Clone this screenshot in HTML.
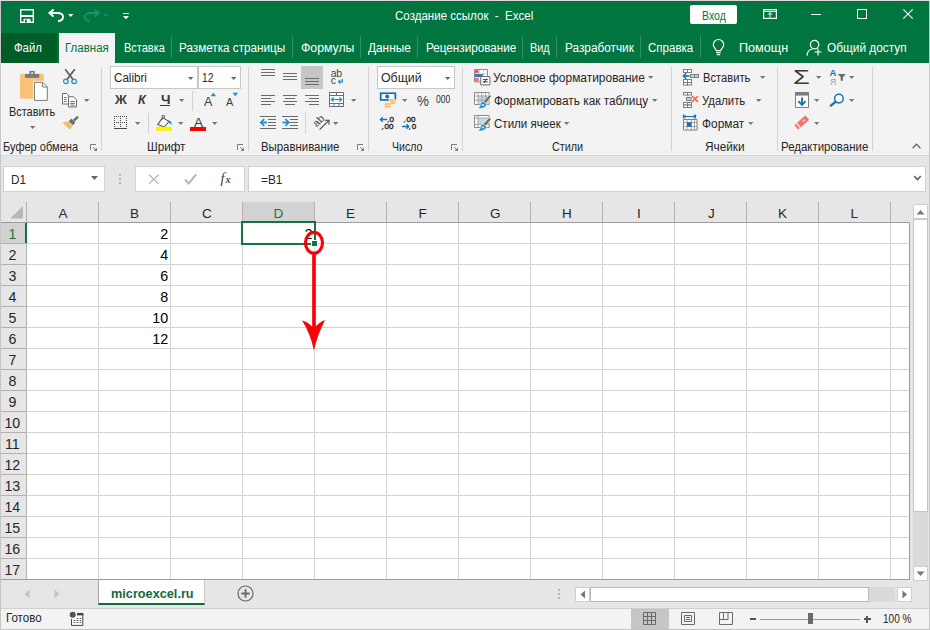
<!DOCTYPE html>
<html lang="ru"><head><meta charset="utf-8"><title>Создание ссылок - Excel</title>
<style>
html,body{margin:0;padding:0}
body{width:930px;height:630px;overflow:hidden;position:relative;background:#e6e6e6;font-family:"Liberation Sans", sans-serif;}
div,span,svg{position:absolute;box-sizing:border-box}
span{line-height:20px;white-space:pre}
svg{overflow:visible}
.g{left:0;top:0;width:0;height:0}
</style></head><body>
<div class="g" id="window-chrome">
<div style="left:0px;top:0px;width:930px;height:33px;background:#01753f;"></div>
<div style="left:0px;top:33px;width:930px;height:30px;background:#01753f;"></div>
<div style="left:1px;top:33px;width:56px;height:30px;background:#005c27;"></div>
<div style="left:59px;top:33px;width:56px;height:30px;background:#f3f3f3;"></div>
<div style="left:0px;top:63px;width:930px;height:92px;background:#f3f3f3;"></div>
<div style="left:0px;top:155px;width:930px;height:1px;background:#d6d6d6;"></div>
<div style="left:171px;top:36px;width:1px;height:22px;background:rgba(255,255,255,0.2);"></div>
<div style="left:292px;top:36px;width:1px;height:22px;background:rgba(255,255,255,0.2);"></div>
<div style="left:360px;top:36px;width:1px;height:22px;background:rgba(255,255,255,0.2);"></div>
<div style="left:417px;top:36px;width:1px;height:22px;background:rgba(255,255,255,0.2);"></div>
<div style="left:522px;top:36px;width:1px;height:22px;background:rgba(255,255,255,0.2);"></div>
<div style="left:556px;top:36px;width:1px;height:22px;background:rgba(255,255,255,0.2);"></div>
<div style="left:640px;top:36px;width:1px;height:22px;background:rgba(255,255,255,0.2);"></div>
<div style="left:700px;top:36px;width:1px;height:22px;background:rgba(255,255,255,0.2);"></div>
<div style="left:690px;top:5px;width:47px;height:19px;background:#fff;border-radius:2px;"></div>
<div style="left:101px;top:67px;width:1px;height:84px;background:#d2d2d2;"></div>
<div style="left:248px;top:67px;width:1px;height:84px;background:#d2d2d2;"></div>
<div style="left:368px;top:67px;width:1px;height:84px;background:#d2d2d2;"></div>
<div style="left:462px;top:67px;width:1px;height:84px;background:#d2d2d2;"></div>
<div style="left:671px;top:67px;width:1px;height:84px;background:#d2d2d2;"></div>
<div style="left:777px;top:67px;width:1px;height:84px;background:#d2d2d2;"></div>
<div style="left:872px;top:67px;width:1px;height:84px;background:#d2d2d2;"></div>
</div>
<div class="g" id="formula-bar">
<div style="left:3px;top:166px;width:102px;height:26px;background:#fff;border:1px solid #d1d1d1;"></div>
<div style="left:135px;top:166px;width:110px;height:26px;background:#fff;border:1px solid #d1d1d1;"></div>
<div style="left:248px;top:166px;width:678px;height:26px;background:#fff;border:1px solid #d1d1d1;"></div>
<div style="left:119px;top:174px;width:2px;height:2px;background:#b5b5b5;"></div>
<div style="left:119px;top:178px;width:2px;height:2px;background:#b5b5b5;"></div>
<div style="left:119px;top:182px;width:2px;height:2px;background:#b5b5b5;"></div>
</div>
<div class="g" id="grid">
<div style="left:0px;top:202px;width:910px;height:21px;background:#e6e6e6;"></div>
<div style="left:26px;top:223px;width:884px;height:357px;background:#fff;"></div>
<div style="left:242px;top:202px;width:72px;height:20px;background:#d2d2d2;"></div>
<div style="left:0px;top:223px;width:26px;height:20px;background:#d2d2d2;"></div>
<div style="left:26px;top:223px;width:1px;height:357px;background:#d4d4d4;"></div>
<div style="left:26px;top:202px;width:1px;height:20px;background:#b1b1b1;"></div>
<div style="left:98px;top:223px;width:1px;height:357px;background:#d4d4d4;"></div>
<div style="left:98px;top:202px;width:1px;height:20px;background:#b1b1b1;"></div>
<div style="left:170px;top:223px;width:1px;height:357px;background:#d4d4d4;"></div>
<div style="left:170px;top:202px;width:1px;height:20px;background:#b1b1b1;"></div>
<div style="left:242px;top:223px;width:1px;height:357px;background:#d4d4d4;"></div>
<div style="left:242px;top:202px;width:1px;height:20px;background:#b1b1b1;"></div>
<div style="left:314px;top:223px;width:1px;height:357px;background:#d4d4d4;"></div>
<div style="left:314px;top:202px;width:1px;height:20px;background:#b1b1b1;"></div>
<div style="left:386px;top:223px;width:1px;height:357px;background:#d4d4d4;"></div>
<div style="left:386px;top:202px;width:1px;height:20px;background:#b1b1b1;"></div>
<div style="left:458px;top:223px;width:1px;height:357px;background:#d4d4d4;"></div>
<div style="left:458px;top:202px;width:1px;height:20px;background:#b1b1b1;"></div>
<div style="left:530px;top:223px;width:1px;height:357px;background:#d4d4d4;"></div>
<div style="left:530px;top:202px;width:1px;height:20px;background:#b1b1b1;"></div>
<div style="left:602px;top:223px;width:1px;height:357px;background:#d4d4d4;"></div>
<div style="left:602px;top:202px;width:1px;height:20px;background:#b1b1b1;"></div>
<div style="left:674px;top:223px;width:1px;height:357px;background:#d4d4d4;"></div>
<div style="left:674px;top:202px;width:1px;height:20px;background:#b1b1b1;"></div>
<div style="left:746px;top:223px;width:1px;height:357px;background:#d4d4d4;"></div>
<div style="left:746px;top:202px;width:1px;height:20px;background:#b1b1b1;"></div>
<div style="left:818px;top:223px;width:1px;height:357px;background:#d4d4d4;"></div>
<div style="left:818px;top:202px;width:1px;height:20px;background:#b1b1b1;"></div>
<div style="left:890px;top:223px;width:1px;height:357px;background:#d4d4d4;"></div>
<div style="left:890px;top:202px;width:1px;height:20px;background:#b1b1b1;"></div>
<div style="left:27px;top:243px;width:883px;height:1px;background:#d4d4d4;"></div>
<div style="left:0px;top:243px;width:26px;height:1px;background:#b1b1b1;"></div>
<div style="left:27px;top:264px;width:883px;height:1px;background:#d4d4d4;"></div>
<div style="left:0px;top:264px;width:26px;height:1px;background:#b1b1b1;"></div>
<div style="left:27px;top:285px;width:883px;height:1px;background:#d4d4d4;"></div>
<div style="left:0px;top:285px;width:26px;height:1px;background:#b1b1b1;"></div>
<div style="left:27px;top:306px;width:883px;height:1px;background:#d4d4d4;"></div>
<div style="left:0px;top:306px;width:26px;height:1px;background:#b1b1b1;"></div>
<div style="left:27px;top:327px;width:883px;height:1px;background:#d4d4d4;"></div>
<div style="left:0px;top:327px;width:26px;height:1px;background:#b1b1b1;"></div>
<div style="left:27px;top:348px;width:883px;height:1px;background:#d4d4d4;"></div>
<div style="left:0px;top:348px;width:26px;height:1px;background:#b1b1b1;"></div>
<div style="left:27px;top:369px;width:883px;height:1px;background:#d4d4d4;"></div>
<div style="left:0px;top:369px;width:26px;height:1px;background:#b1b1b1;"></div>
<div style="left:27px;top:390px;width:883px;height:1px;background:#d4d4d4;"></div>
<div style="left:0px;top:390px;width:26px;height:1px;background:#b1b1b1;"></div>
<div style="left:27px;top:411px;width:883px;height:1px;background:#d4d4d4;"></div>
<div style="left:0px;top:411px;width:26px;height:1px;background:#b1b1b1;"></div>
<div style="left:27px;top:432px;width:883px;height:1px;background:#d4d4d4;"></div>
<div style="left:0px;top:432px;width:26px;height:1px;background:#b1b1b1;"></div>
<div style="left:27px;top:453px;width:883px;height:1px;background:#d4d4d4;"></div>
<div style="left:0px;top:453px;width:26px;height:1px;background:#b1b1b1;"></div>
<div style="left:27px;top:474px;width:883px;height:1px;background:#d4d4d4;"></div>
<div style="left:0px;top:474px;width:26px;height:1px;background:#b1b1b1;"></div>
<div style="left:27px;top:495px;width:883px;height:1px;background:#d4d4d4;"></div>
<div style="left:0px;top:495px;width:26px;height:1px;background:#b1b1b1;"></div>
<div style="left:27px;top:516px;width:883px;height:1px;background:#d4d4d4;"></div>
<div style="left:0px;top:516px;width:26px;height:1px;background:#b1b1b1;"></div>
<div style="left:27px;top:537px;width:883px;height:1px;background:#d4d4d4;"></div>
<div style="left:0px;top:537px;width:26px;height:1px;background:#b1b1b1;"></div>
<div style="left:27px;top:558px;width:883px;height:1px;background:#d4d4d4;"></div>
<div style="left:0px;top:558px;width:26px;height:1px;background:#b1b1b1;"></div>
<div style="left:26px;top:223px;width:1px;height:357px;background:#b1b1b1;"></div>
<div style="left:0px;top:222px;width:910px;height:1px;background:#9d9d9d;"></div>
<div style="left:909px;top:222px;width:1px;height:358px;background:#9d9d9d;"></div>
<div style="left:0px;top:579px;width:910px;height:1px;background:#9d9d9d;"></div>
<div style="left:25px;top:223px;width:2px;height:20px;background:#12753f;"></div>
<div style="left:242px;top:221px;width:72px;height:2px;background:#12753f;"></div>
<svg style="left:10px;top:206px" width="13" height="13" viewBox="0 0 13 13"><path d="M13 0v12.600H0.200z" fill="#b7b7b7"/></svg>
</div>
<div class="g" id="selection">
<div style="left:241px;top:221px;width:75px;height:24px;border:2px solid #12753f;"></div>
<div style="left:310.5px;top:239.5px;width:8px;height:7px;background:#fff;"></div>
<div style="left:312px;top:241px;width:5px;height:5px;background:#12753f;"></div>
</div>
<div class="g" id="vertical-scrollbar">
<div style="left:913px;top:204px;width:15px;height:15px;background:#fff;border:1px solid #cfcfcf;"></div>
<svg style="left:916px;top:209px" width="9" height="6" viewBox="0 0 9 6"><path d="M0.5 5.5h8l-4-4.5z" fill="#777"/></svg>
<div style="left:913px;top:219px;width:15px;height:293px;background:#fff;border:1px solid #c4c4c4;"></div>
<div style="left:913px;top:512px;width:15px;height:55px;background:#dadada;"></div>
<div style="left:913px;top:566px;width:15px;height:15px;background:#fff;border:1px solid #cfcfcf;"></div>
<svg style="left:916px;top:571px" width="9" height="6" viewBox="0 0 9 6"><path d="M0.5 0.5h8l-4 4.5z" fill="#777"/></svg>
</div>
<div class="g" id="bottom-sheet-tabs-h-scrollbar">
<div style="left:98px;top:580px;width:107px;height:25px;background:#fff;border-bottom:2px solid #0a6b35;border-left:1px solid #a6a6a6;border-right:1px solid #c6c6c6"></div>
<svg style="left:24px;top:588.6px" width="6" height="10" viewBox="0 0 6 10"><path d="M5.5 0.5v9l-5-4.5z" fill="#c3c3c3"/></svg>
<svg style="left:53.6px;top:588.6px" width="6" height="10" viewBox="0 0 6 10"><path d="M0.5 0.5v9l5-4.5z" fill="#c3c3c3"/></svg>
<svg style="left:237px;top:585px" width="17" height="17" viewBox="0 0 17 17"><circle cx="8.5" cy="8.5" r="7.5" fill="none" stroke="#6a6a6a" stroke-width="1.2"/><path d="M8.5 4.300v8.400M4.300 8.500h8.400" stroke="#6a6a6a" stroke-width="1.800"/></svg>
<div style="left:558px;top:589px;width:2px;height:2px;background:#b5b5b5;"></div>
<div style="left:558px;top:593px;width:2px;height:2px;background:#b5b5b5;"></div>
<div style="left:558px;top:597px;width:2px;height:2px;background:#b5b5b5;"></div>
<div style="left:575px;top:587px;width:15px;height:15px;background:#fff;border:1px solid #cfcfcf;"></div>
<svg style="left:580px;top:590px" width="6" height="9" viewBox="0 0 6 9"><path d="M5 0.5v8l-4.5-4z" fill="#777"/></svg>
<div style="left:590px;top:587px;width:279px;height:15px;background:#fff;border:1px solid #b9b9b9;"></div>
<div style="left:869px;top:587px;width:26px;height:15px;background:#dadada;"></div>
<div style="left:897px;top:587px;width:15px;height:15px;background:#fff;border:1px solid #cfcfcf;"></div>
<svg style="left:902px;top:590px" width="6" height="9" viewBox="0 0 6 9"><path d="M0.5 0.5v8l4.5-4z" fill="#777"/></svg>
</div>
<div class="g" id="status-bar">
<div style="left:0px;top:608px;width:930px;height:22px;background:#f3f3f3;border-top:1px solid #cfcfcf;"></div>
<div style="left:631px;top:609px;width:38px;height:20px;background:#c6c6c6;"></div>
<div style="left:760px;top:619px;width:100px;height:1px;background:#9a9a9a;"></div>
<div style="left:808px;top:613px;width:5px;height:11px;background:#6b6b6b;"></div>
<div style="left:750px;top:618px;width:6px;height:2px;background:#555;"></div>
<div style="left:863.5px;top:618px;width:7px;height:2px;background:#555;"></div>
<div style="left:866px;top:615.5px;width:2px;height:7px;background:#555;"></div>
</div>
<div class="g" id="title-bar-icons">
<svg style="left:20px;top:9px" width="14" height="14" viewBox="0 0 14 14"><path d="M0.700 0.700h12.600v12.600h-12.600z" fill="none" stroke="#fff" stroke-width="1.400"/><path d="M1 7h12" stroke="#fff" stroke-width="2"/><path d="M3.600 9.800h6.800v3.400h-6.800z" fill="#fff"/><path d="M5 10.800h1.800v2.600H5z" fill="#01753f"/></svg>
<svg style="left:48px;top:8px" width="17" height="15" viewBox="0 0 17 15"><path d="M2 5H9.500c7 0 7.400 7.200 0.600 8.200" fill="none" stroke="#fff" stroke-width="1.900"/><path d="M5.600 1.400L1.400 5l4.200 3.600" fill="none" stroke="#fff" stroke-width="2"/></svg>
<svg style="left:66.9px;top:13.0px" width="7.4" height="5" viewBox="0 0 7.4 5"><path d="M1 1h5.4l-2.7 3z" fill="#fff"/></svg>
<svg style="left:83px;top:8px" width="17" height="15" viewBox="0 0 17 15"><path d="M15 5H7.500c-7 0-7.400 7.200-0.600 8.200" fill="none" stroke="#10926a" stroke-width="2.200"/><path d="M11.400 1.400L15.600 5l-4.200 3.600" fill="none" stroke="#10926a" stroke-width="2.300"/></svg>
<svg style="left:101.8px;top:13.0px" width="7.4" height="5" viewBox="0 0 7.4 5"><path d="M1 1h5.4l-2.7 3z" fill="#10926a"/></svg>
<div style="left:123px;top:13px;width:6px;height:1px;background:#fff;"></div>
<svg style="left:122.0px;top:14.8px" width="8" height="5.2" viewBox="0 0 8 5.2"><path d="M1 1h6l-3.0 3.2z" fill="#fff"/></svg>
<svg style="left:763px;top:9px" width="14" height="10" viewBox="0 0 14 10"><path d="M0.6 0.6h12.8v8.8h-12.8z" fill="none" stroke="#fff" stroke-width="1.2"/><path d="M0.6 2.4h12.8" stroke="#fff" stroke-width="1"/><path d="M7 8.5v-4.6M4.8 5.8L7 3.6l2.2 2.2" fill="none" stroke="#fff" stroke-width="1"/></svg>
<div style="left:811px;top:14px;width:10px;height:1px;background:#fff;"></div>
<div style="left:857px;top:9px;width:10px;height:10px;border:1px solid #fff;"></div>
<svg style="left:903px;top:9px" width="10" height="10" viewBox="0 0 10 10"><path d="M0.3 0.3l9.4 9.4M9.7 0.3l-9.4 9.4" stroke="#fff" stroke-width="1.1"/></svg>
<svg style="left:712px;top:39px" width="13" height="18" viewBox="0 0 13 18"><path d="M4.2 11.6c0-2-2.9-2.9-2.9-5.9a5.2 5.2 0 0 1 10.4 0c0 3-2.9 3.9-2.9 5.9z" fill="none" stroke="#fff" stroke-width="1.2"/><path d="M4.3 13.6h4.4M4.8 15.6h3.4" stroke="#fff" stroke-width="1.1"/></svg>
<svg style="left:806px;top:39px" width="17" height="18" viewBox="0 0 17 18"><circle cx="8.6" cy="5.6" r="4.2" fill="none" stroke="#fff" stroke-width="1.2"/><path d="M1 16.6c0.3-4 2.6-6.2 5.6-6.6" fill="none" stroke="#fff" stroke-width="1.2"/><path d="M12 9.5v7M8.5 13h7" stroke="#fff" stroke-width="1.2"/></svg>
<div style="left:0px;top:0px;width:930px;height:1px;background:#e2d7da;"></div>
<div style="left:0px;top:1px;width:1px;height:629px;background:#c6c6c6;"></div>
<div style="left:929px;top:1px;width:1px;height:629px;background:#c6c6c6;"></div>
<div style="left:0px;top:629px;width:930px;height:1px;background:#c2c2c2;"></div>
</div>
<div class="g" id="clipboard-group">
<svg style="left:20px;top:70px" width="29" height="32" viewBox="0 0 29 32"><rect x="0" y="3.8" width="24" height="25" rx="1.6" fill="#f8c277"/><path d="M5 4h14.2v3.9H5z" fill="#7a7a7a"/><path d="M9.4 0.9h5.3v3.5H9.4z" fill="#7a7a7a"/><rect x="11.2" y="2.2" width="1.8" height="1.6" fill="#f3f3f3"/><path d="M13 10.8h11v18H13z" fill="#f3f3f3"/><path d="M14.5 12.3h8.3l4.5 4.5v13.6h-12.8z" fill="#fff" stroke="#7a7a7a" stroke-width="1"/><path d="M22.6 12.5v4.5h4.5" fill="none" stroke="#7a7a7a" stroke-width="1"/></svg>
<svg style="left:28.9px;top:125.0px" width="7.4" height="5" viewBox="0 0 7.4 5"><path d="M1 1h5.4l-2.7 3z" fill="#777"/></svg>
<svg style="left:62px;top:68px" width="16" height="17" viewBox="0 0 16 17"><path d="M3.2 1.2l8.4 11M12.8 1.2l-8.4 11" stroke="#5e5e5e" stroke-width="1.7" fill="none"/><circle cx="3.9" cy="13.3" r="2.3" fill="none" stroke="#1e8bcd" stroke-width="1.2"/><circle cx="12.1" cy="13.3" r="2.3" fill="none" stroke="#1e8bcd" stroke-width="1.2"/></svg>
<svg style="left:61px;top:92px" width="17" height="16" viewBox="0 0 17 16"><path d="M1.5 1.5h4.2l2.3 2.3v8.2h-6.5z" fill="#fff" stroke="#6d6d6d" stroke-width="1"/><path d="M3 5.5h2.6M3 7.5h2.6M3 9.5h2.6" stroke="#1e8bcd" stroke-width="1"/><path d="M7.5 4.7h5l3 3v7.3h-8z" fill="#fff" stroke="#6d6d6d" stroke-width="1"/><path d="M9.2 9.5h4.6M9.2 11.5h4.6M9.2 13.2h4.6" stroke="#1e8bcd" stroke-width="1"/></svg>
<svg style="left:82.8px;top:98.0px" width="7.4" height="5" viewBox="0 0 7.4 5"><path d="M1 1h5.4l-2.7 3z" fill="#777"/></svg>
<svg style="left:61px;top:115px" width="18" height="16" viewBox="0 0 18 16"><path d="M16.2 0.8l1.6 1.6l-4 4.2l-1.8-1.8z" fill="#6d6d6d"/><path d="M10.4 3.6l4 4l-2.6 2.6l-4-4z" fill="#6d6d6d"/><path d="M7.4 6.6l4 4l-2.4 4.2l-7.6-7.2z" fill="#f5b968"/></svg>
<svg style="left:90px;top:144px" width="8" height="8" viewBox="0 0 8 8"><path d="M0.500 6V0.500H6" fill="none" stroke="#7a7a7a" stroke-width="1"/><path d="M3.200 3.200L6 6" stroke="#7a7a7a" stroke-width="1"/><path d="M7 3.400V7H3.400z" fill="#7a7a7a"/></svg>
<svg style="left:237px;top:144px" width="8" height="8" viewBox="0 0 8 8"><path d="M0.500 6V0.500H6" fill="none" stroke="#7a7a7a" stroke-width="1"/><path d="M3.200 3.200L6 6" stroke="#7a7a7a" stroke-width="1"/><path d="M7 3.400V7H3.400z" fill="#7a7a7a"/></svg>
<svg style="left:357px;top:144px" width="8" height="8" viewBox="0 0 8 8"><path d="M0.500 6V0.500H6" fill="none" stroke="#7a7a7a" stroke-width="1"/><path d="M3.200 3.200L6 6" stroke="#7a7a7a" stroke-width="1"/><path d="M7 3.400V7H3.400z" fill="#7a7a7a"/></svg>
<svg style="left:451px;top:144px" width="8" height="8" viewBox="0 0 8 8"><path d="M0.500 6V0.500H6" fill="none" stroke="#7a7a7a" stroke-width="1"/><path d="M3.200 3.200L6 6" stroke="#7a7a7a" stroke-width="1"/><path d="M7 3.400V7H3.400z" fill="#7a7a7a"/></svg>
<svg style="left:912px;top:143px" width="9" height="6" viewBox="0 0 9 6"><path d="M0.6 5.2l3.9-4l3.9 4" fill="none" stroke="#666" stroke-width="1.3"/></svg>
</div>
<div class="g" id="font-group">
<div style="left:110px;top:66px;width:88px;height:23px;background:#fff;border:1px solid #c6c6c6;"></div>
<div style="left:198px;top:66px;width:43px;height:23px;background:#fff;border:1px solid #c6c6c6;"></div>
<svg style="left:186.7px;top:75.5px" width="7.4" height="5" viewBox="0 0 7.4 5"><path d="M1 1h5.4l-2.7 3z" fill="#666"/></svg>
<svg style="left:229.7px;top:75.5px" width="7.4" height="5" viewBox="0 0 7.4 5"><path d="M1 1h5.4l-2.7 3z" fill="#666"/></svg>
<div style="left:160px;top:105px;width:10px;height:1px;background:#3b3b3b;"></div>
<svg style="left:177.7px;top:98.0px" width="7.4" height="5" viewBox="0 0 7.4 5"><path d="M1 1h5.4l-2.7 3z" fill="#777"/></svg>
<div style="left:192px;top:91px;width:1px;height:20px;background:#d2d2d2;"></div>
<svg style="left:210px;top:92px" width="7" height="5" viewBox="0 0 7 5"><path d="M0.6 4.2h5.4l-2.7-3.4z" fill="#1e8bcd"/></svg>
<svg style="left:232px;top:92px" width="7" height="5" viewBox="0 0 7 5"><path d="M0.6 0.8h5.4l-2.7 3.4z" fill="#1e8bcd"/></svg>
<svg style="left:114px;top:116px" width="13" height="13" viewBox="0 0 13 13"><path d="M0 0.5h13M0 6.5h13" stroke="#444" stroke-width="1" stroke-dasharray="1 1" fill="none"/><path d="M0.5 0v12M6.5 0v12M12.5 0v12" stroke="#444" stroke-width="1" stroke-dasharray="1 1" fill="none"/><path d="M0 12.5h13" stroke="#444" stroke-width="1"/></svg>
<svg style="left:133.7px;top:120.8px" width="7.4" height="5" viewBox="0 0 7.4 5"><path d="M1 1h5.4l-2.7 3z" fill="#777"/></svg>
<div style="left:148px;top:113px;width:1px;height:21px;background:#d2d2d2;"></div>
<svg style="left:156px;top:114px" width="17" height="17" viewBox="0 0 17 17"><path d="M6.600 3.600l6.400 3.900l-4.800 5.500l-6.500-2.400z" fill="#fff" stroke="#555" stroke-width="1.100" stroke-linejoin="round"/><path d="M6.200 6V1.500h2.200V4.600" fill="none" stroke="#666" stroke-width="1"/><path d="M12.600 6.200c2.400 0.600 3.300 2.500 3 4.800c-1-1.200-1.900-1.900-3.500-2.500z" fill="#1e8bcd"/><path d="M0 12.800h16v4H0z" fill="#fff200"/></svg>
<svg style="left:176.9px;top:120.8px" width="7.4" height="5" viewBox="0 0 7.4 5"><path d="M1 1h5.4l-2.7 3z" fill="#777"/></svg>
<div style="left:190px;top:127px;width:16px;height:4px;background:#f00;"></div>
<svg style="left:210.7px;top:120.8px" width="7.4" height="5" viewBox="0 0 7.4 5"><path d="M1 1h5.4l-2.7 3z" fill="#777"/></svg>
</div>
<div class="g" id="alignment-group">
<div style="left:261px;top:69px;width:14px;height:1px;background:#6b6b6b;"></div>
<div style="left:261px;top:72px;width:14px;height:1px;background:#6b6b6b;"></div>
<div style="left:261px;top:75px;width:14px;height:1px;background:#6b6b6b;"></div>
<div style="left:283px;top:73px;width:14px;height:1px;background:#6b6b6b;"></div>
<div style="left:283px;top:76px;width:14px;height:1px;background:#6b6b6b;"></div>
<div style="left:283px;top:79px;width:14px;height:1px;background:#6b6b6b;"></div>
<div style="left:301px;top:66px;width:22px;height:23px;background:#c6c6c6;"></div>
<div style="left:305px;top:78px;width:14px;height:1px;background:#6b6b6b;"></div>
<div style="left:305px;top:81px;width:14px;height:1px;background:#6b6b6b;"></div>
<div style="left:305px;top:84px;width:14px;height:1px;background:#6b6b6b;"></div>
<div style="left:261px;top:95px;width:14px;height:1px;background:#6b6b6b;"></div>
<div style="left:261px;top:98px;width:10px;height:1px;background:#6b6b6b;"></div>
<div style="left:261px;top:101px;width:14px;height:1px;background:#6b6b6b;"></div>
<div style="left:261px;top:104px;width:10px;height:1px;background:#6b6b6b;"></div>
<div style="left:283px;top:95px;width:14px;height:1px;background:#6b6b6b;"></div>
<div style="left:285px;top:98px;width:10px;height:1px;background:#6b6b6b;"></div>
<div style="left:283px;top:101px;width:14px;height:1px;background:#6b6b6b;"></div>
<div style="left:285px;top:104px;width:10px;height:1px;background:#6b6b6b;"></div>
<div style="left:305px;top:95px;width:14px;height:1px;background:#6b6b6b;"></div>
<div style="left:309px;top:98px;width:10px;height:1px;background:#6b6b6b;"></div>
<div style="left:305px;top:101px;width:14px;height:1px;background:#6b6b6b;"></div>
<div style="left:309px;top:104px;width:10px;height:1px;background:#6b6b6b;"></div>
<svg style="left:329px;top:92px" width="15" height="15" viewBox="0 0 15 15"><path d="M0.5 0.5h14v14h-14z" fill="#fff" stroke="#6b6b6b" stroke-width="1"/><path d="M0.5 3.5h14M0.5 11.5h14M7.5 0.5v3M5 11.5v3M10 11.5v3" stroke="#6b6b6b" stroke-width="1" fill="none"/><path d="M2.5 7.5h10" stroke="#1e8bcd" stroke-width="1.2"/><path d="M4.6 5.4L2.4 7.5l2.2 2.1M10.4 5.4l2.2 2.1l-2.2 2.1" stroke="#1e8bcd" stroke-width="1.2" fill="none"/></svg>
<svg style="left:349.8px;top:98.0px" width="7.4" height="5" viewBox="0 0 7.4 5"><path d="M1 1h5.4l-2.7 3z" fill="#777"/></svg>
<div style="left:260px;top:116px;width:16px;height:1px;background:#6b6b6b;"></div>
<div style="left:260px;top:128px;width:16px;height:1px;background:#6b6b6b;"></div>
<div style="left:268px;top:119px;width:8px;height:1px;background:#6b6b6b;"></div>
<div style="left:268px;top:122px;width:8px;height:1px;background:#6b6b6b;"></div>
<div style="left:268px;top:125px;width:8px;height:1px;background:#6b6b6b;"></div>
<svg style="left:260px;top:118px" width="8" height="9" viewBox="0 0 8 9"><path d="M1 4.5h6" stroke="#1e8bcd" stroke-width="1.8"/><path d="M4.2 1.2L0.8 4.5l3.4 3.3" stroke="#1e8bcd" stroke-width="1.7" fill="none"/></svg>
<div style="left:282px;top:116px;width:16px;height:1px;background:#6b6b6b;"></div>
<div style="left:282px;top:128px;width:16px;height:1px;background:#6b6b6b;"></div>
<div style="left:290px;top:119px;width:8px;height:1px;background:#6b6b6b;"></div>
<div style="left:290px;top:122px;width:8px;height:1px;background:#6b6b6b;"></div>
<div style="left:290px;top:125px;width:8px;height:1px;background:#6b6b6b;"></div>
<svg style="left:282px;top:118px" width="8" height="9" viewBox="0 0 8 9"><path d="M0.5 4.5h6" stroke="#1e8bcd" stroke-width="1.8"/><path d="M3.4 1.2l3.4 3.3l-3.4 3.3" stroke="#1e8bcd" stroke-width="1.7" fill="none"/></svg>
<div style="left:305px;top:113px;width:1px;height:21px;background:#d2d2d2;"></div>
<svg style="left:312px;top:114px" width="19" height="17" viewBox="0 0 19 17"><text x="0" y="0" font-size="10.5" fill="#444" transform="translate(4.8 13.4) rotate(-45)">ab</text><path d="M7.6 15.6L16.6 6.6" stroke="#444" stroke-width="1.2"/><path d="M12.8 6.2h4.2v4.2" stroke="#444" stroke-width="1.1" fill="none"/></svg>
<svg style="left:331.7px;top:120.8px" width="7.4" height="5" viewBox="0 0 7.4 5"><path d="M1 1h5.4l-2.7 3z" fill="#777"/></svg>
<svg style="left:330px;top:68px" width="15" height="18" viewBox="0 0 15 18"><text x="0.8" y="8.6" font-size="10.5" fill="#444" textLength="11.4">ab</text><text x="0.8" y="16" font-size="10.5" fill="#444">c</text><path d="M12.4 11v2.8h-3.6" stroke="#1e8bcd" stroke-width="1.2" fill="none"/><path d="M10.4 11.9l-1.9 1.9l1.9 1.9" stroke="#1e8bcd" stroke-width="1.2" fill="none"/></svg>
</div>
<div class="g" id="number-group">
<div style="left:377px;top:66px;width:78px;height:23px;background:#fff;border:1px solid #c6c6c6;"></div>
<svg style="left:443.7px;top:75.5px" width="7.4" height="5" viewBox="0 0 7.4 5"><path d="M1 1h5.4l-2.7 3z" fill="#666"/></svg>
<svg style="left:379px;top:92px" width="18" height="17" viewBox="0 0 18 17"><path d="M0.8 0.4h16.4v8.4H0.8z" fill="#1272b6"/><path d="M2.6 2.1h12.8v5H2.6z" fill="#fff"/><circle cx="8.2" cy="4.6" r="2" fill="#1272b6"/><ellipse cx="13.4" cy="8.3" rx="3.6" ry="1.5" fill="#f5b968" stroke="#f3f3f3" stroke-width="0.8"/><ellipse cx="13.4" cy="10.8" rx="3.6" ry="1.5" fill="#f5b968" stroke="#f3f3f3" stroke-width="0.8"/><ellipse cx="8.6" cy="12.2" rx="3.6" ry="1.5" fill="#f5b968" stroke="#f3f3f3" stroke-width="0.8"/><ellipse cx="8.6" cy="14.6" rx="3.6" ry="1.5" fill="#f5b968" stroke="#f3f3f3" stroke-width="0.8"/></svg>
<svg style="left:400.7px;top:97.8px" width="7.4" height="5" viewBox="0 0 7.4 5"><path d="M1 1h5.4l-2.7 3z" fill="#777"/></svg>
<svg style="left:379px;top:115px" width="17" height="17" viewBox="0 0 17 17"><text x="10.400" y="6.800" font-size="8" fill="#111" stroke="#222" stroke-width="0.350">0</text><text x="5.500" y="14" font-size="8" fill="#111" stroke="#222" stroke-width="0.350" textLength="9">00</text><path d="M9.900 5.800L8.600 7.700M4.400 12.900L2.800 15" stroke="#333" stroke-width="1" fill="none"/><path d="M1.400 4.500h6.600" stroke="#1272b6" stroke-width="1.500"/><path d="M3.800 2.200L1.500 4.500L3.800 6.800" stroke="#1272b6" stroke-width="1.400" fill="none"/></svg>
<svg style="left:401px;top:115px" width="17" height="17" viewBox="0 0 17 17"><text x="5.400" y="6.800" font-size="8" fill="#111" stroke="#222" stroke-width="0.350" textLength="9">00</text><text x="10.800" y="14" font-size="8" fill="#111" stroke="#222" stroke-width="0.350">0</text><path d="M4.300 5.800L3 7.800M9.400 12.900L8 15" stroke="#333" stroke-width="1" fill="none"/><path d="M1.100 11.500h6.600" stroke="#1272b6" stroke-width="1.500"/><path d="M5.400 9.200L7.700 11.500L5.400 13.800" stroke="#1272b6" stroke-width="1.400" fill="none"/></svg>
</div>
<div class="g" id="styles-group">
<svg style="left:474px;top:69px" width="17" height="17" viewBox="0 0 17 17"><path d="M0.5 0.5h13v12.4h-13z" fill="#fff" stroke="#8a8a8a" stroke-width="1"/><path d="M1 1h3.8v3.4H1z" fill="#f4736b"/><path d="M1 5h8v3.2H1z" fill="#2e7fc1"/><path d="M1 9h3.8v3.4H1z" fill="#f4736b"/><rect x="2.2" y="2" width="1.6" height="1.4" fill="#d5352b"/><path d="M5.2 1v3.8M9.6 1v6M5.2 4.6h8" stroke="#c9c9c9" stroke-width="0.8" fill="none"/><path d="M6.7 7.5h9.2v8.4H6.7z" fill="#fff" stroke="#6d6d6d" stroke-width="1"/><path d="M8.8 10.6h5M8.8 12.8h5M12.6 9.4l-2.6 4.6" stroke="#444" stroke-width="1" fill="none"/></svg>
<svg style="left:474px;top:92px" width="17" height="17" viewBox="0 0 17 17"><path d="M0.5 0.5h14.6v12h-14.6z" fill="#fff" stroke="#8a8a8a" stroke-width="1"/><path d="M4.4 4.4h10.4v7.8H4.4z" fill="#b9dcdc"/><path d="M0.5 4h14.6M0.5 8.2h14.6M4 0.5v12M7.8 0.5v12M11.500 0.500v12" stroke="#9a9a9a" stroke-width="0.9" fill="none"/><g transform="translate(0 0.6)"><path d="M15.4 2.2L17.2 4L12 11L9.200 8.800z" fill="#6d6d6d" stroke="#f3f3f3" stroke-width="0.8"/><path d="M9.2 8.8L12.400 11.300c0.300 3.200-3.600 4.900-8.600 4.400c1.700-0.800 2.100-1.700 2.400-3.100c0.400-2 1.500-3.400 3-3.800z" fill="#1e8bcd" stroke="#f3f3f3" stroke-width="0.6"/><ellipse cx="8.9" cy="12.3" rx="1.300" ry="1" fill="#d9ecf8"/></g></svg>
<svg style="left:474px;top:115px" width="17" height="17" viewBox="0 0 17 17"><path d="M0.5 0.5h14.6v12h-14.6z" fill="#fff" stroke="#8a8a8a" stroke-width="1"/><path d="M4.4 3.400h10.4v6H4.4z" fill="#b9dcdc"/><path d="M0.5 3h14.6M0.5 9.6h14.6M4 0.5v12" stroke="#9a9a9a" stroke-width="0.900" fill="none"/><g transform="translate(0 0.2)"><path d="M15.4 2.2L17.2 4L12 11L9.200 8.800z" fill="#6d6d6d" stroke="#f3f3f3" stroke-width="0.8"/><path d="M9.2 8.8L12.400 11.300c0.300 3.200-3.600 4.900-8.600 4.400c1.700-0.800 2.100-1.700 2.400-3.100c0.400-2 1.500-3.400 3-3.800z" fill="#1e8bcd" stroke="#f3f3f3" stroke-width="0.6"/><ellipse cx="8.9" cy="12.3" rx="1.300" ry="1" fill="#d9ecf8"/></g></svg>
<svg style="left:646.8px;top:74.8px" width="7.4" height="5" viewBox="0 0 7.4 5"><path d="M1 1h5.4l-2.7 3z" fill="#777"/></svg>
<svg style="left:650.8px;top:98.0px" width="7.4" height="5" viewBox="0 0 7.4 5"><path d="M1 1h5.4l-2.7 3z" fill="#777"/></svg>
<svg style="left:562.6px;top:120.8px" width="7.4" height="5" viewBox="0 0 7.4 5"><path d="M1 1h5.4l-2.7 3z" fill="#777"/></svg>
</div>
<div class="g" id="cells-group">
<svg style="left:682px;top:68px" width="18" height="18" viewBox="0 0 18 18"><rect x="1.5" y="1.5" width="4" height="3" fill="#fff" stroke="#7d7d7d" stroke-width="1"/><rect x="5.5" y="1.5" width="4" height="3" fill="#fff" stroke="#7d7d7d" stroke-width="1"/><rect x="8.5" y="6.5" width="4" height="3" fill="#b9dcdc" stroke="#7d7d7d" stroke-width="1"/><rect x="12.5" y="6.5" width="4" height="3" fill="#b9dcdc" stroke="#7d7d7d" stroke-width="1"/><rect x="1.5" y="11.5" width="4" height="3" fill="#fff" stroke="#7d7d7d" stroke-width="1"/><rect x="5.5" y="11.5" width="4" height="3" fill="#fff" stroke="#7d7d7d" stroke-width="1"/><rect x="1.5" y="14.5" width="4" height="2.5" fill="#fff" stroke="#7d7d7d" stroke-width="1"/><rect x="5.5" y="14.5" width="4" height="2.5" fill="#fff" stroke="#7d7d7d" stroke-width="1"/><path d="M1.400 8h6" stroke="#1272b6" stroke-width="1.6"/><path d="M4.2 5.2L1.400 8l2.800 2.800" stroke="#1272b6" stroke-width="1.500" fill="none"/></svg>
<svg style="left:682px;top:91px" width="18" height="18" viewBox="0 0 18 18"><rect x="1.5" y="1.5" width="4" height="2.5" fill="#fff" stroke="#7d7d7d" stroke-width="1"/><rect x="5.5" y="1.5" width="4" height="2.5" fill="#fff" stroke="#7d7d7d" stroke-width="1"/><rect x="4.5" y="6.5" width="4.5" height="3" fill="#b9dcdc" stroke="#7d7d7d" stroke-width="1"/><rect x="1.5" y="11.5" width="4" height="2.5" fill="#fff" stroke="#7d7d7d" stroke-width="1"/><rect x="5.5" y="11.5" width="4" height="2.5" fill="#fff" stroke="#7d7d7d" stroke-width="1"/><rect x="1.5" y="14" width="4" height="2.5" fill="#fff" stroke="#7d7d7d" stroke-width="1"/><rect x="5.5" y="14" width="4" height="2.5" fill="#fff" stroke="#7d7d7d" stroke-width="1"/><path d="M10 5l6 6M16 5l-6 6" stroke="#f4644f" stroke-width="1.700"/></svg>
<svg style="left:682px;top:114px" width="17" height="18" viewBox="0 0 17 18"><path d="M1.500 2.500h12" stroke="#1272b6" stroke-width="1.100"/><path d="M1.500 0.500v4M13.500 0.500v4" stroke="#1272b6" stroke-width="1.200"/><path d="M3.600 0.900L1.800 2.500l1.800 1.600M11.400 0.900l1.800 1.600l-1.800 1.600" stroke="#1272b6" stroke-width="1" fill="none"/><path d="M1.500 5.500h13.500v10.500h-13.500z" fill="#fff" stroke="#7d7d7d"/><path d="M1.500 8.500h13.500M1.500 12.500h13.500M5 5.500v10.500M9.500 5.500v10.500M12.500 5.500v10.500" stroke="#9a9a9a" stroke-width="0.900" fill="none"/><path d="M5 8.300h4.400v4.400H5z" fill="#1272b6"/></svg>
<svg style="left:758.8px;top:75.0px" width="7.4" height="5" viewBox="0 0 7.4 5"><path d="M1 1h5.4l-2.7 3z" fill="#777"/></svg>
<svg style="left:754.6px;top:97.9px" width="7.4" height="5" viewBox="0 0 7.4 5"><path d="M1 1h5.4l-2.7 3z" fill="#777"/></svg>
<svg style="left:746.8px;top:121.0px" width="7.4" height="5" viewBox="0 0 7.4 5"><path d="M1 1h5.4l-2.7 3z" fill="#777"/></svg>
</div>
<div class="g" id="editing-group">
<svg style="left:814.6px;top:75.0px" width="7.4" height="5" viewBox="0 0 7.4 5"><path d="M1 1h5.4l-2.7 3z" fill="#777"/></svg>
<svg style="left:829px;top:68px" width="18" height="18" viewBox="0 0 18 18"><text x="0.600" y="7.800" font-size="9.500" font-weight="bold" fill="#1272b6">A</text><text x="1" y="16.600" font-size="8.500" fill="#9a9a9a">Я</text><path d="M8.800 6h8l-2.900 3.200v3.600h-2.200V9.200z" fill="#6d6d6d"/></svg>
<svg style="left:847.7px;top:75.0px" width="7.4" height="5" viewBox="0 0 7.4 5"><path d="M1 1h5.4l-2.7 3z" fill="#777"/></svg>
<svg style="left:795px;top:92px" width="14" height="16" viewBox="0 0 14 16"><path d="M0.500 0.500h13v15h-13z" fill="#fff" stroke="#7d7d7d"/><path d="M0 0h14v3.600H0z" fill="#7d7d7d"/><path d="M7 5.500v7" stroke="#1272b6" stroke-width="1.900"/><path d="M3.400 9.200L7 12.800l3.600-3.600" stroke="#1272b6" stroke-width="1.900" fill="none"/></svg>
<svg style="left:812.7px;top:97.8px" width="7.4" height="5" viewBox="0 0 7.4 5"><path d="M1 1h5.4l-2.7 3z" fill="#777"/></svg>
<svg style="left:829px;top:93px" width="16" height="14" viewBox="0 0 16 14"><circle cx="9.900" cy="5.600" r="4.300" fill="#fff" stroke="#1272b6" stroke-width="1.500"/><path d="M6.600 8.800L1.800 12.600" stroke="#1272b6" stroke-width="2.300" stroke-linecap="round"/></svg>
<svg style="left:847.7px;top:97.8px" width="7.4" height="5" viewBox="0 0 7.4 5"><path d="M1 1h5.4l-2.7 3z" fill="#777"/></svg>
<svg style="left:794px;top:115px" width="16" height="15" viewBox="0 0 16 15"><g transform="translate(7.800 7.400) rotate(-42)"><rect x="-7.400" y="-2.900" width="14.800" height="5.800" rx="0.800" fill="#f4736b"/><rect x="-5.200" y="-2.900" width="1.300" height="5.800" fill="#f3f3f3"/><rect x="1" y="-0.800" width="3" height="1.500" fill="#fbd0cb"/></g></svg>
<svg style="left:812.7px;top:120.8px" width="7.4" height="5" viewBox="0 0 7.4 5"><path d="M1 1h5.4l-2.7 3z" fill="#777"/></svg>
</div>
<div class="g" id="formula-bar-icons">
<svg style="left:89.8px;top:175.2px" width="9" height="6" viewBox="0 0 9 6"><path d="M1 1h7l-3.5 4z" fill="#666"/></svg>
<svg style="left:148px;top:174px" width="12" height="11" viewBox="0 0 12 11"><path d="M1 0.800l9.600 9M10.600 0.800L1 9.800" stroke="#b8b8b8" stroke-width="1.400"/></svg>
<svg style="left:184px;top:173px" width="14" height="12" viewBox="0 0 14 12"><path d="M1 6.600l3.700 3.800L12.200 1.400" stroke="#b8b8b8" stroke-width="2.100" fill="none"/></svg>
<svg style="left:219px;top:171px" width="15" height="15" viewBox="0 0 15 15"><text x="1.600" y="11.600" font-size="14.500" fill="#444" style="font-family:'Liberation Serif',serif;font-style:italic">f</text><text x="6.600" y="11.800" font-size="10" fill="#444" style="font-family:'Liberation Serif',serif;font-style:italic;font-weight:bold">x</text></svg>
<svg style="left:913px;top:175px" width="9" height="7" viewBox="0 0 9 7"><path d="M1.200 1.200l3.300 3.300l3.300-3.300" stroke="#666" stroke-width="1.700" fill="none"/></svg>
</div>
<div class="g" id="status-bar-icons">
<svg style="left:69px;top:611px" width="16" height="16" viewBox="0 0 16 16"><path d="M2.500 8v6.400h11.300V3H8.400" fill="#fff" stroke="#444" stroke-width="1"/><path d="M8 2h6.300v2.400H8z" fill="#444"/><circle cx="3.700" cy="3.800" r="3" fill="#555"/><rect x="4.6" y="9" width="1.800" height="0.900" fill="#444"/><rect x="4.6" y="11.1" width="1.800" height="0.900" fill="#444"/><rect x="7.6" y="6.9" width="1.800" height="0.900" fill="#444"/><rect x="7.6" y="9" width="1.800" height="0.900" fill="#444"/><rect x="7.6" y="11.1" width="1.800" height="0.900" fill="#444"/><rect x="10.6" y="6.9" width="1.800" height="0.900" fill="#444"/><rect x="10.6" y="9" width="1.800" height="0.900" fill="#444"/><rect x="10.6" y="11.1" width="1.800" height="0.900" fill="#444"/></svg>
<svg style="left:643px;top:612px" width="13" height="13" viewBox="0 0 13 13"><path d="M0.500 0.500h12v12h-12z" fill="none" stroke="#6b6b6b"/><path d="M4.500 0.500v12M8.500 0.500v12M0.500 4.500h12M0.500 8.500h12" stroke="#6b6b6b" fill="none"/></svg>
<svg style="left:681px;top:612px" width="14" height="13" viewBox="0 0 14 13"><path d="M0.500 0.500h13v12h-13z" fill="none" stroke="#6b6b6b"/><path d="M3.500 3.500h7v6h-7z" fill="none" stroke="#6b6b6b"/><path d="M5 5.500h4M5 7.500h4" stroke="#6b6b6b"/></svg>
<svg style="left:719px;top:612px" width="14" height="13" viewBox="0 0 14 13"><path d="M0.500 0.500h13v12h-13z" fill="none" stroke="#6b6b6b"/><path d="M0.500 7.500h8.500V0.500M4.500 0.500v7" fill="none" stroke="#6b6b6b"/></svg>
</div>
<div class="g" id="labels">
<span style="left:394.6px;top:6.0px;font-size:12px;color:#fff;transform:scaleX(0.962);transform-origin:0 0;">Создание ссылок  -  Excel</span>
<span style="left:701.8px;top:6.0px;font-size:12px;color:#01753f;transform:scaleX(0.875);transform-origin:0 0;">Вход</span>
<span style="left:13.5px;top:38.0px;font-size:12px;color:#fff;transform:scaleX(0.945);transform-origin:0 0;">Файл</span>
<span style="left:64.8px;top:38.0px;font-size:12px;color:#01753f;transform:scaleX(0.958);transform-origin:0 0;">Главная</span>
<span style="left:123.5px;top:38.0px;font-size:12px;color:#fff;transform:scaleX(0.916);transform-origin:0 0;">Вставка</span>
<span style="left:179.4px;top:38.0px;font-size:12px;color:#fff;transform:scaleX(0.976);transform-origin:0 0;">Разметка страницы</span>
<span style="left:300.5px;top:38.0px;font-size:12px;color:#fff;transform:scaleX(1.023);transform-origin:0 0;">Формулы</span>
<span style="left:367.9px;top:38.0px;font-size:12px;color:#fff;transform:scaleX(0.987);transform-origin:0 0;">Данные</span>
<span style="left:425.8px;top:38.0px;font-size:12px;color:#fff;transform:scaleX(0.975);transform-origin:0 0;">Рецензирование</span>
<span style="left:530.3px;top:38.0px;font-size:12px;color:#fff;transform:scaleX(0.909);transform-origin:0 0;">Вид</span>
<span style="left:564.6px;top:38.0px;font-size:12px;color:#fff;transform:scaleX(0.984);transform-origin:0 0;">Разработчик</span>
<span style="left:648.0px;top:38.0px;font-size:12px;color:#fff;transform:scaleX(0.962);transform-origin:0 0;">Справка</span>
<span style="left:738.6px;top:38.0px;font-size:12px;color:#fff;transform:scaleX(1.053);transform-origin:0 0;">Помощн</span>
<span style="left:826.7px;top:38.0px;font-size:12px;color:#fff;transform:scaleX(0.988);transform-origin:0 0;">Общий доступ</span>
<span style="left:9.1px;top:102.0px;font-size:12px;color:#262626;transform:scaleX(0.91);transform-origin:0 0;">Вставить</span>
<span style="left:3.4px;top:137.0px;font-size:12px;color:#262626;transform:scaleX(0.92);transform-origin:0 0;">Буфер обмена</span>
<span style="left:113.6px;top:68.0px;font-size:12px;color:#262626;transform:scaleX(0.968);transform-origin:0 0;">Calibri</span>
<span style="left:201.6px;top:68.0px;font-size:12px;color:#262626;transform:scaleX(0.852);transform-origin:0 0;">12</span>
<span style="left:114.8px;top:90.0px;font-size:12px;color:#3b3b3b;transform:scaleX(1.084);transform-origin:0 0;font-weight:bold;">Ж</span>
<span style="left:138.1px;top:90.0px;font-size:12px;color:#3b3b3b;transform:scaleX(1.052);transform-origin:0 0;font-weight:bold;font-style:italic;">К</span>
<span style="left:160.5px;top:90.0px;font-size:12px;color:#3b3b3b;transform:scaleX(1.125);transform-origin:0 0;font-weight:bold;">Ч</span>
<span style="left:203.6px;top:92.0px;font-size:13.5px;color:#3b3b3b;transform:scaleX(0.93);transform-origin:0 0;">A</span>
<span style="left:226.0px;top:92.0px;font-size:11px;color:#3b3b3b;transform:scaleX(0.992);transform-origin:0 0;">A</span>
<span style="left:194.0px;top:112.5px;font-size:13.5px;color:#3b3b3b;">A</span>
<span style="left:147.4px;top:137.0px;font-size:12px;color:#262626;transform:scaleX(0.974);transform-origin:0 0;">Шрифт</span>
<span style="left:261.0px;top:137.0px;font-size:12px;color:#262626;transform:scaleX(0.949);transform-origin:0 0;">Выравнивание</span>
<span style="left:380.6px;top:68.0px;font-size:12px;color:#262626;transform:scaleX(1.026);transform-origin:0 0;">Общий</span>
<span style="left:416.5px;top:91.0px;font-size:15px;color:#3b3b3b;transform:scaleX(0.895);transform-origin:0 0;">%</span>
<span style="left:436.4px;top:90.2px;font-size:10.2px;color:#2a2a2a;transform:scaleX(0.836);transform-origin:0 0;">000</span>
<span style="left:391.5px;top:137.0px;font-size:12px;color:#262626;transform:scaleX(0.88);transform-origin:0 0;">Число</span>
<span style="left:493.2px;top:68.0px;font-size:12px;color:#262626;transform:scaleX(0.995);transform-origin:0 0;">Условное форматирование</span>
<span style="left:493.6px;top:91.0px;font-size:12px;color:#262626;transform:scaleX(0.987);transform-origin:0 0;">Форматировать как таблицу</span>
<span style="left:493.9px;top:114.0px;font-size:12px;color:#262626;transform:scaleX(0.963);transform-origin:0 0;">Стили ячеек</span>
<span style="left:551.6px;top:137.0px;font-size:12px;color:#262626;transform:scaleX(0.898);transform-origin:0 0;">Стили</span>
<span style="left:702.6px;top:68.0px;font-size:12px;color:#262626;transform:scaleX(0.933);transform-origin:0 0;">Вставить</span>
<span style="left:702.4px;top:91.0px;font-size:12px;color:#262626;transform:scaleX(0.944);transform-origin:0 0;">Удалить</span>
<span style="left:702.1px;top:114.0px;font-size:12px;color:#262626;transform:scaleX(0.991);transform-origin:0 0;">Формат</span>
<span style="left:704.8px;top:137.0px;font-size:12px;color:#262626;transform:scaleX(0.985);transform-origin:0 0;">Ячейки</span>
<span style="left:780.6px;top:137.0px;font-size:12px;color:#262626;transform:scaleX(0.955);transform-origin:0 0;">Редактирование</span>
<span style="left:793.1px;top:67.0px;font-size:21px;color:#3b3b3b;transform:scaleX(1.3);transform-origin:0 0;">Σ</span>
<span style="left:10.7px;top:170.0px;font-size:12.5px;color:#262626;transform:scaleX(0.938);transform-origin:0 0;">D1</span>
<span style="left:261.0px;top:170.0px;font-size:12.5px;color:#262626;transform:scaleX(0.948);transform-origin:0 0;">=B1</span>
<span style="left:58.5px;top:203.5px;font-size:13.5px;color:#262626;">A</span>
<span style="left:130.0px;top:203.5px;font-size:13.5px;color:#262626;">B</span>
<span style="left:202.0px;top:203.5px;font-size:13.5px;color:#262626;">C</span>
<span style="left:273.5px;top:203.5px;font-size:13.5px;color:#217346;">D</span>
<span style="left:346.0px;top:203.5px;font-size:13.5px;color:#262626;">E</span>
<span style="left:418.5px;top:203.5px;font-size:13.5px;color:#262626;">F</span>
<span style="left:490.0px;top:203.5px;font-size:13.5px;color:#262626;">G</span>
<span style="left:562.0px;top:203.5px;font-size:13.5px;color:#262626;">H</span>
<span style="left:637.0px;top:203.5px;font-size:13.5px;color:#262626;">I</span>
<span style="left:708.0px;top:203.5px;font-size:13.5px;color:#262626;">J</span>
<span style="left:778.0px;top:203.5px;font-size:13.5px;color:#262626;">K</span>
<span style="left:850.5px;top:203.5px;font-size:13.5px;color:#262626;">L</span>
<span style="left:8.4px;top:223.8px;font-size:14.2px;color:#217346;">1</span>
<span style="left:8.4px;top:244.8px;font-size:14.2px;color:#262626;">2</span>
<span style="left:8.4px;top:265.8px;font-size:14.2px;color:#262626;">3</span>
<span style="left:8.4px;top:286.8px;font-size:14.2px;color:#262626;">4</span>
<span style="left:8.4px;top:307.8px;font-size:14.2px;color:#262626;">5</span>
<span style="left:8.4px;top:328.8px;font-size:14.2px;color:#262626;">6</span>
<span style="left:8.4px;top:349.8px;font-size:14.2px;color:#262626;">7</span>
<span style="left:8.4px;top:370.8px;font-size:14.2px;color:#262626;">8</span>
<span style="left:8.4px;top:391.8px;font-size:14.2px;color:#262626;">9</span>
<span style="left:4.4px;top:412.8px;font-size:14.2px;color:#262626;">10</span>
<span style="left:4.9px;top:433.8px;font-size:14.2px;color:#262626;">11</span>
<span style="left:4.4px;top:454.8px;font-size:14.2px;color:#262626;">12</span>
<span style="left:4.4px;top:475.8px;font-size:14.2px;color:#262626;">13</span>
<span style="left:4.4px;top:496.8px;font-size:14.2px;color:#262626;">14</span>
<span style="left:4.4px;top:517.8px;font-size:14.2px;color:#262626;">15</span>
<span style="left:4.4px;top:538.8px;font-size:14.2px;color:#262626;">16</span>
<span style="left:4.4px;top:559.8px;font-size:14.2px;color:#262626;">17</span>
<span style="left:160.2px;top:223.6px;font-size:14.3px;color:#000;">2</span>
<span style="left:160.2px;top:244.6px;font-size:14.3px;color:#000;">4</span>
<span style="left:160.2px;top:265.6px;font-size:14.3px;color:#000;">6</span>
<span style="left:160.2px;top:286.6px;font-size:14.3px;color:#000;">8</span>
<span style="left:152.2px;top:307.6px;font-size:14.3px;color:#000;">10</span>
<span style="left:152.2px;top:328.6px;font-size:14.3px;color:#000;">12</span>
<span style="left:304.4px;top:223.6px;font-size:14.3px;color:#000;">2</span>
<span style="left:110.8px;top:583.8px;font-size:13.5px;color:#15693c;transform:scaleX(0.941);transform-origin:0 0;font-weight:bold;">microexcel.ru</span>
<span style="left:6.4px;top:608.0px;font-size:12px;color:#262626;transform:scaleX(0.96);transform-origin:0 0;">Готово</span>
<span style="left:882.7px;top:608.8px;font-size:12px;color:#262626;transform:scaleX(0.835);transform-origin:0 0;">100 %</span>
</div>
<div class="g" id="annotation">
<svg style="left:300px;top:228px" width="30" height="125" viewBox="0 0 30 125"><ellipse cx="14" cy="14.8" rx="8.55" ry="10.4" fill="none" stroke="#fb0007" stroke-width="3.1"/><path d="M14 25.5V101" stroke="#fb0007" stroke-width="3.7"/><path d="M13.9 122.5C11.5 111 7.5 101 2 92.3C6 93.5 10 96 13.9 100.5C17.5 96 21 93.500 25 92C20.5 101 16.5 111 13.9 122.5Z" fill="#fb0007"/></svg>
</div>
</body></html>
